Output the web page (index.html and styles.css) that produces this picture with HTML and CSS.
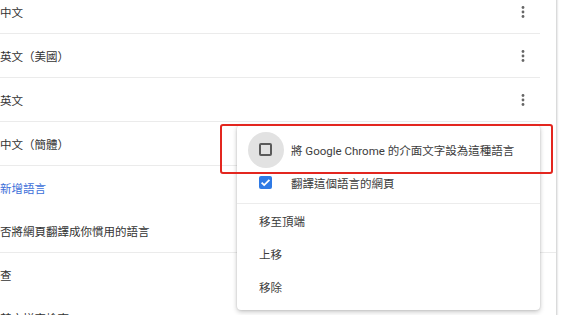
FILE: index.html
```html
<!DOCTYPE html>
<html lang="zh-Hant">
<head>
<meta charset="utf-8">
<title>語言</title>
<link rel="stylesheet" href="styles.css">
</head>
<body>
<div class="card">
  <ul class="langs">
    <li class="row lang"><span>中文</span><svg class="kebab" width="12" height="14" viewBox="0 0 12 14"><circle cx="6" cy="2.5" r="1.4"/><circle cx="6" cy="7" r="1.4"/><circle cx="6" cy="11.5" r="1.4"/></svg></li>
    <li class="row lang"><span>英文（美國）</span><svg class="kebab" width="12" height="14" viewBox="0 0 12 14"><circle cx="6" cy="2.5" r="1.4"/><circle cx="6" cy="7" r="1.4"/><circle cx="6" cy="11.5" r="1.4"/></svg></li>
    <li class="row lang"><span>英文</span><svg class="kebab" width="12" height="14" viewBox="0 0 12 14"><circle cx="6" cy="2.5" r="1.4"/><circle cx="6" cy="7" r="1.4"/><circle cx="6" cy="11.5" r="1.4"/></svg></li>
    <li class="row lang"><span>中文（簡體）</span><svg class="kebab" width="12" height="14" viewBox="0 0 12 14"><circle cx="6" cy="2.5" r="1.4"/><circle cx="6" cy="7" r="1.4"/><circle cx="6" cy="11.5" r="1.4"/></svg></li>
  </ul>
  <div class="row add">新增語言</div>
  <div class="row full">否將網頁翻譯成你慣用的語言</div>
  <div class="row">查</div>
  <div class="row">英文拼字檢查</div>
</div>

<div class="menu">
  <div class="item check first">
    <span class="cbwrap"><span class="ripple"></span><span class="box"></span></span>
    <span>將 Google Chrome 的介面文字設為這種語言</span>
  </div>
  <div class="item check second">
    <span class="cbwrap"><span class="box on"><svg width="13" height="13" viewBox="0 0 13 13"><path d="M2.6 6.6 L5.2 9.1 L10.4 3.8" fill="none" stroke="#fff" stroke-width="1.8"/></svg></span></span>
    <span>翻譯這個語言的網頁</span>
  </div>
  <div class="divider"></div>
  <div class="item plain top">移至頂端</div>
  <div class="item plain">上移</div>
  <div class="item plain">移除</div>
</div>

<div class="highlight"></div>
</body>
</html>
```
FILE: styles.css
```css
html, body {
  margin: 0;
  padding: 0;
  overflow: hidden;
  background: #fff;
}
body {
  width: 562px;
  height: 315px;
  position: relative;
  font-family: Roboto, "Noto Sans CJK TC", sans-serif;
  font-size: 11.5px;
  color: #333;
}
.card {
  width: 556px;
  height: 340px;
  margin-top: -10px;
  background: #fff;
  box-shadow: 1px 0 2px rgba(60, 64, 67, 0.28);
}
.langs {
  list-style: none;
  margin: 0;
  padding: 0;
  width: 540px;
}
.row {
  height: 43px;
  display: flex;
  align-items: center;
  white-space: nowrap;
}
.lang {
  justify-content: space-between;
  padding-right: 11px;
  border-bottom: 1px solid #ebebeb;
}
.kebab {
  fill: #666;
}
.add {
  color: #3d6fd9;
}
.full {
  border-bottom: 1px solid #ebebeb;
}
.menu {
  position: absolute;
  left: 237px;
  top: 125px;
  width: 303px;
  height: 185px;
  box-sizing: border-box;
  padding-top: 8px;
  background: #fff;
  border-radius: 4px;
  box-shadow: 0 2px 5px rgba(0, 0, 0, 0.22), 0 0 2px rgba(0, 0, 0, 0.15);
}
.item {
  display: flex;
  align-items: center;
  white-space: nowrap;
  color: #3c3c3c;
}
.check {
  padding-left: 22px;
}
.first {
  height: 34px;
}
.second {
  height: 32px;
}
.cbwrap {
  position: relative;
  width: 14px;
  height: 14px;
  margin-right: 18px;
  flex: none;
}
.ripple {
  position: absolute;
  left: -11px;
  top: -11px;
  width: 36px;
  height: 36px;
  border-radius: 50%;
  background: #e2e2e2;
}
.box {
  position: absolute;
  left: 0;
  top: 0;
  width: 13px;
  height: 13px;
  box-sizing: border-box;
  border: 2px solid #5a5a5a;
  border-radius: 2px;
}
.box.on {
  border: none;
  background: #2f7ae5;
}
.box.on svg {
  display: block;
}
.divider {
  margin-top: 4px;
  height: 1px;
  background: #ececec;
}
.plain {
  height: 33px;
  padding-left: 22px;
}
.plain.top {
  height: 33px;
}
.highlight {
  position: absolute;
  left: 220px;
  top: 124px;
  width: 333px;
  height: 50px;
  box-sizing: border-box;
  border: 2.5px solid #e3261f;
  border-radius: 3px;
}
```
